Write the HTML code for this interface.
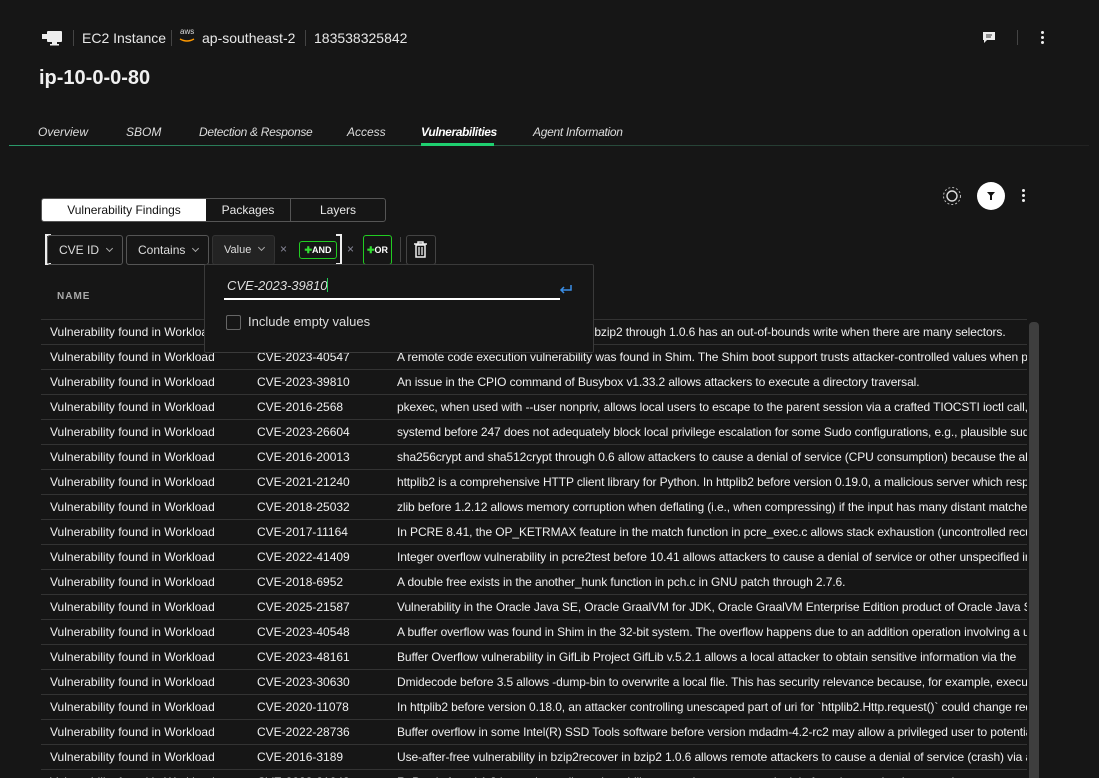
<!DOCTYPE html>
<html style="width:1099px;height:778px;overflow:hidden"><head><meta charset="utf-8"><style>
*{box-sizing:border-box;margin:0;padding:0}
body{width:1099px;height:778px;background:#161616;color:#e8e8e8;font-family:"Liberation Sans",sans-serif;position:relative;overflow:hidden}
.a{position:absolute;white-space:nowrap}
.vs{position:absolute;width:1px;background:#444}
.row{position:absolute;left:41px;width:986px;height:25px;border-top:1px solid #333;font-size:12px;color:#f0f0f0}
.row span{position:absolute;top:5px;white-space:nowrap;overflow:hidden}
.c1{left:9px}.c2{left:216px}.c3{left:356px;width:630px;letter-spacing:-0.1px}
.btn{position:absolute;border:1px solid #555;border-radius:3px;font-size:12px;color:#ddd;height:30px;line-height:28px;padding-left:11px}
.chev{display:inline-block;width:5px;height:5px;border-right:1px solid #aaa;border-bottom:1px solid #aaa;transform:rotate(45deg);margin-left:8px;position:relative;top:-3px}
</style></head><body>
<svg class="a" style="left:42px;top:30px" width="22" height="16" viewBox="0 0 22 16"><rect x="0" y="4" width="6" height="5" fill="#eee"/><rect x="5" y="1" width="15" height="11" rx="1" fill="#eee"/><rect x="10" y="12" width="5" height="2" fill="#eee"/><rect x="8" y="14" width="9" height="1.5" fill="#eee"/></svg>
<div class="vs" style="left:73px;top:30px;height:16px"></div>
<div class="a" style="left:82px;top:30px;font-size:14px">EC2 Instance</div>
<div class="vs" style="left:171px;top:30px;height:16px"></div>
<div class="a" style="left:180px;top:27px;font-size:8px;color:#ddd">aws</div>
<svg class="a" style="left:179px;top:38px" width="16" height="6"><path d="M1 1 Q8 5 15 1" stroke="#f90" stroke-width="1.4" fill="none"/></svg>
<div class="a" style="left:202px;top:30px;font-size:14px">ap-southeast-2</div>
<div class="vs" style="left:305px;top:30px;height:16px"></div>
<div class="a" style="left:314px;top:30px;font-size:14px">183538325842</div>
<svg class="a" style="left:982px;top:31px" width="14" height="13"><path d="M1 1h12v8H5l-3 3V9H1z" fill="#eee"/><path d="M4 4h6M4 6h5" stroke="#333"/></svg>
<div class="vs" style="left:1017px;top:30px;height:15px"></div>
<div class="a" style="left:1041px;top:31px;width:4px"><div style="width:3px;height:3px;background:#eee;border-radius:50%;margin-bottom:2px"></div><div style="width:3px;height:3px;background:#eee;border-radius:50%;margin-bottom:2px"></div><div style="width:3px;height:3px;background:#eee;border-radius:50%"></div></div>
<div class="a" style="left:39px;top:67px;font-size:20px;font-weight:bold;color:#f0f0f0">ip-10-0-0-80</div>
<div class="a" style="top:125px;font-size:12px;font-style:italic;color:#ddd;left:38px">Overview</div>
<div class="a" style="top:125px;font-size:12px;font-style:italic;color:#ddd;left:126px">SBOM</div>
<div class="a" style="top:125px;font-size:12px;font-style:italic;color:#ddd;left:199px;letter-spacing:-0.3px">Detection &amp; Response</div>
<div class="a" style="top:125px;font-size:12px;font-style:italic;color:#ddd;left:347px">Access</div>
<div class="a" style="top:125px;font-size:12px;font-style:italic;font-weight:bold;color:#fff;left:421px;letter-spacing:-0.4px">Vulnerabilities</div>
<div class="a" style="top:125px;font-size:12px;font-style:italic;color:#ddd;left:533px;letter-spacing:-0.3px">Agent Information</div>
<div class="a" style="left:9px;top:145px;width:1080px;height:1px;background:linear-gradient(90deg,#2a9a6a,#2a5a45 40%,#222 100%)"></div>
<div class="a" style="left:421px;top:143px;width:73px;height:3px;background:#1fd070"></div>
<svg class="a" style="left:942px;top:186px" width="20" height="20"><circle cx="10" cy="10" r="5" stroke="#ddd" stroke-width="1.4" fill="none"/><circle cx="10" cy="10" r="8.5" stroke="#bbb" stroke-width="1" fill="none" stroke-dasharray="2 2"/></svg>
<div class="a" style="left:977px;top:182px;width:28px;height:28px;border-radius:50%;background:#fff"></div>
<svg class="a" style="left:987px;top:192px" width="8" height="8"><path d="M0 0h8L5 3.5V8H3V3.5z" fill="#111"/></svg>
<div class="a" style="left:1022px;top:189px"><div style="width:3px;height:3px;background:#eee;border-radius:50%;margin-bottom:2px"></div><div style="width:3px;height:3px;background:#eee;border-radius:50%;margin-bottom:2px"></div><div style="width:3px;height:3px;background:#eee;border-radius:50%"></div></div>
<div class="a" style="left:41px;top:198px;width:345px;height:24px;border:1px solid #555;border-radius:3px;font-size:12px">
<div class="a" style="left:0;top:0;width:164px;height:22px;background:#fff;color:#111;text-align:center;line-height:22px;border-radius:2px 0 0 2px">Vulnerability Findings</div>
<div class="a" style="left:164px;top:0;width:85px;height:22px;border-right:1px solid #555;text-align:center;line-height:22px">Packages</div>
<div class="a" style="left:249px;top:0;width:94px;height:22px;text-align:center;line-height:22px">Layers</div>
</div>
<div class="a" style="left:45px;top:234px;width:6px;height:31px;border:2px solid #eee;border-right:none"></div>
<div class="btn" style="left:47px;top:235px;width:76px">CVE ID<span class="chev"></span></div>
<div class="btn" style="left:126px;top:235px;width:83px">Contains<span class="chev"></span></div>
<div class="btn" style="left:212px;top:235px;width:63px;background:#232323;border-color:#333;font-size:11px">Value<span class="chev"></span></div>
<div class="a" style="left:280px;top:242px;font-size:12px;color:#889">×</div>
<div class="a" style="left:299px;top:241px;width:38px;height:18px;border:1px solid #2c2;border-radius:3px;font-size:9px;font-weight:bold;text-align:center;line-height:16px;color:#fff"><span style="color:#3d3">✚</span>AND</div>
<div class="a" style="left:336px;top:234px;width:6px;height:31px;border:2px solid #eee;border-left:none"></div>
<div class="a" style="left:347px;top:242px;font-size:12px;color:#889">×</div>
<div class="a" style="left:363px;top:235px;width:29px;height:30px;border:1px solid #2c2;border-radius:3px;font-size:9px;font-weight:bold;text-align:center;line-height:28px;color:#fff"><span style="color:#3d3">✚</span>OR</div>
<div class="vs" style="left:400px;top:237px;height:25px"></div>
<div class="a" style="left:406px;top:235px;width:30px;height:30px;border:1px solid #444;border-radius:3px"></div>
<svg class="a" style="left:413px;top:241px" width="15" height="17"><path d="M1 3h13M5 3V1h5v2M3 4h9v12H3z" stroke="#eee" stroke-width="1.5" fill="none"/><path d="M6 6v8M9 6v8" stroke="#eee" stroke-width="1.3"/></svg>
<div class="a" style="left:57px;top:291px;font-size:10px;font-weight:bold;letter-spacing:1px;color:#aaa">NAME</div>
<div class="row" style="top:319px"><span class="c1">Vulnerability found in Workload</span><span class="c2">CVE-2019-12900</span><span class="c3">BZ2_decompress in decompress.c in bzip2 through 1.0.6 has an out-of-bounds write when there are many selectors.</span></div>
<div class="row" style="top:344px"><span class="c1">Vulnerability found in Workload</span><span class="c2">CVE-2023-40547</span><span class="c3">A remote code execution vulnerability was found in Shim. The Shim boot support trusts attacker-controlled values when parsing</span></div>
<div class="row" style="top:369px"><span class="c1">Vulnerability found in Workload</span><span class="c2">CVE-2023-39810</span><span class="c3">An issue in the CPIO command of Busybox v1.33.2 allows attackers to execute a directory traversal.</span></div>
<div class="row" style="top:394px"><span class="c1">Vulnerability found in Workload</span><span class="c2">CVE-2016-2568</span><span class="c3">pkexec, when used with --user nonpriv, allows local users to escape to the parent session via a crafted TIOCSTI ioctl call, which</span></div>
<div class="row" style="top:419px"><span class="c1">Vulnerability found in Workload</span><span class="c2">CVE-2023-26604</span><span class="c3">systemd before 247 does not adequately block local privilege escalation for some Sudo configurations, e.g., plausible sudoers</span></div>
<div class="row" style="top:444px"><span class="c1">Vulnerability found in Workload</span><span class="c2">CVE-2016-20013</span><span class="c3">sha256crypt and sha512crypt through 0.6 allow attackers to cause a denial of service (CPU consumption) because the algorithm</span></div>
<div class="row" style="top:469px"><span class="c1">Vulnerability found in Workload</span><span class="c2">CVE-2021-21240</span><span class="c3">httplib2 is a comprehensive HTTP client library for Python. In httplib2 before version 0.19.0, a malicious server which responds</span></div>
<div class="row" style="top:494px"><span class="c1">Vulnerability found in Workload</span><span class="c2">CVE-2018-25032</span><span class="c3">zlib before 1.2.12 allows memory corruption when deflating (i.e., when compressing) if the input has many distant matches.</span></div>
<div class="row" style="top:519px"><span class="c1">Vulnerability found in Workload</span><span class="c2">CVE-2017-11164</span><span class="c3">In PCRE 8.41, the OP_KETRMAX feature in the match function in pcre_exec.c allows stack exhaustion (uncontrolled recursion)</span></div>
<div class="row" style="top:544px"><span class="c1">Vulnerability found in Workload</span><span class="c2">CVE-2022-41409</span><span class="c3">Integer overflow vulnerability in pcre2test before 10.41 allows attackers to cause a denial of service or other unspecified impacts</span></div>
<div class="row" style="top:569px"><span class="c1">Vulnerability found in Workload</span><span class="c2">CVE-2018-6952</span><span class="c3">A double free exists in the another_hunk function in pch.c in GNU patch through 2.7.6.</span></div>
<div class="row" style="top:594px"><span class="c1">Vulnerability found in Workload</span><span class="c2">CVE-2025-21587</span><span class="c3">Vulnerability in the Oracle Java SE, Oracle GraalVM for JDK, Oracle GraalVM Enterprise Edition product of Oracle Java SE</span></div>
<div class="row" style="top:619px"><span class="c1">Vulnerability found in Workload</span><span class="c2">CVE-2023-40548</span><span class="c3">A buffer overflow was found in Shim in the 32-bit system. The overflow happens due to an addition operation involving a user</span></div>
<div class="row" style="top:644px"><span class="c1">Vulnerability found in Workload</span><span class="c2">CVE-2023-48161</span><span class="c3">Buffer Overflow vulnerability in GifLib Project GifLib v.5.2.1 allows a local attacker to obtain sensitive information via the</span></div>
<div class="row" style="top:669px"><span class="c1">Vulnerability found in Workload</span><span class="c2">CVE-2023-30630</span><span class="c3">Dmidecode before 3.5 allows -dump-bin to overwrite a local file. This has security relevance because, for example, execution</span></div>
<div class="row" style="top:694px"><span class="c1">Vulnerability found in Workload</span><span class="c2">CVE-2020-11078</span><span class="c3">In httplib2 before version 0.18.0, an attacker controlling unescaped part of uri for `httplib2.Http.request()` could change request</span></div>
<div class="row" style="top:719px"><span class="c1">Vulnerability found in Workload</span><span class="c2">CVE-2022-28736</span><span class="c3">Buffer overflow in some Intel(R) SSD Tools software before version mdadm-4.2-rc2 may allow a privileged user to potentially</span></div>
<div class="row" style="top:744px"><span class="c1">Vulnerability found in Workload</span><span class="c2">CVE-2016-3189</span><span class="c3">Use-after-free vulnerability in bzip2recover in bzip2 1.0.6 allows remote attackers to cause a denial of service (crash) via a</span></div>
<div class="row" style="top:769px;height:9px;overflow:hidden"><span class="c1">Vulnerability found in Workload</span><span class="c2">CVE-2023-31043</span><span class="c3">RoBustly found 1.2 in another policy vulnerability to attacker to cause a denial of service or other impacts via</span></div>
<div class="a" style="left:1029px;top:322px;width:10px;height:456px;background:#3e3e3e;border-radius:4px 4px 0 0"></div>
<div class="a" style="left:204px;top:264px;width:390px;height:89px;background:#161616;border:1px solid #3a3a3a;border-radius:2px"></div>
<div class="a" style="left:227px;top:278px;font-size:13px;font-style:italic;color:#ddd">CVE-2023-39810<span style="display:inline-block;width:1px;height:14px;background:#2c5;vertical-align:-2px"></span></div>
<div class="a" style="left:224px;top:298px;width:336px;height:2px;background:#fff"></div>
<svg class="a" style="left:559px;top:284px" width="14" height="10"><path d="M12 1v5H2M5 3L2 6l3 3" stroke="#3a8ee6" stroke-width="1.5" fill="none"/></svg>
<div class="a" style="left:226px;top:315px;width:15px;height:15px;border:1px solid #666;border-radius:2px"></div>
<div class="a" style="left:248px;top:314px;font-size:13px;color:#ddd">Include empty values</div>
</body></html>
